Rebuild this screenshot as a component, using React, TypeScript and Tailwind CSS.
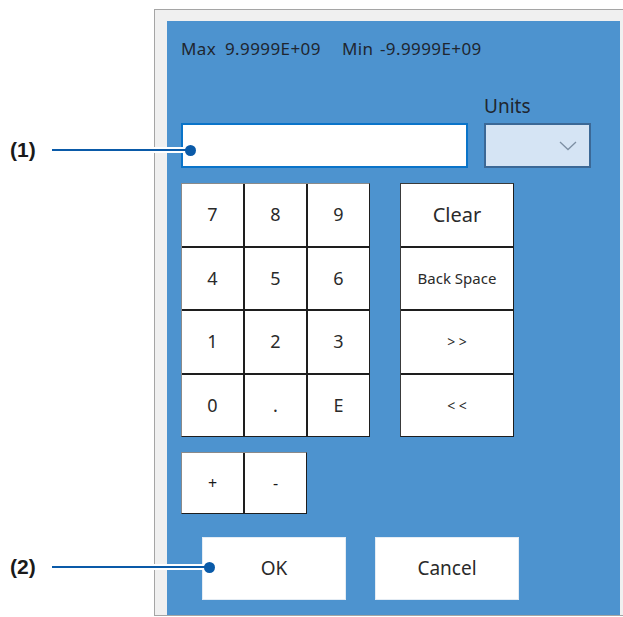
const keys = ["7", "8", "9", "4", "5", "6", "1", "2", "3", "0", ".", "E"];

const sideKeys = [
  { label: "Clear", cls: "text-[20px]" },
  { label: "Back Space", cls: "text-[15px]" },
  { label: "> >", cls: "text-[14px]" },
  { label: "< <", cls: "text-[14px]" },
];

function Callout({ label, top, to }: { label: string; top: number; to: number }) {
  return (
    <div className="absolute left-0 flex items-center" style={{ top: top - 12 }}>
      <span className="w-[52px] pl-[10px] font-['Liberation_Sans',Arial,sans-serif] text-[21px] font-bold leading-6 text-[#1a1a1a]">
        {label}
      </span>
      <div className="flex h-[6px] items-center bg-white" style={{ width: to - 52 }}>
        <div className="h-[2px] w-full bg-[#0a5aa8]" />
      </div>
      <div className="-ml-[5px] h-[11px] w-[11px] rounded-full bg-[#0a5aa8]" />
    </div>
  );
}

export default function App() {
  return (
    <div className="relative h-[617px] w-[623px] overflow-hidden bg-white font-['Noto_Sans','Open_Sans',sans-serif] text-[#1b1b1b]">
      <div className="flex pl-[154px] pt-[9px]">
        <div className="w-[480px] shrink-0 border border-[#a5a5a5] bg-[#f0f0f0] pl-[12px] pt-[11px]">
          <div className="h-[594px] w-[453px] bg-[#4d93cf] pl-[14px] pt-[16px]">
            <p className="flex text-[17px] leading-6 tracking-[0.4px] text-[#1f2630]">
              <span className="w-[44px]">Max</span>
              <span className="w-[117px]">9.9999E+09</span>
              <span className="w-[38px]">Min</span>
              <span>-9.9999E+09</span>
            </p>

            <div className="mt-[33px] flex gap-[16px]">
              <div className="mt-[29px] h-[45px] w-[287px] border-2 border-[#0a74c9] bg-white" />
              <div className="flex flex-col">
                <span className="h-[29px] text-[19px] leading-6 text-[#1f2630]">Units</span>
                <div className="flex h-[45px] w-[107px] items-center justify-end border-2 border-[#3b6896] bg-[#d5e4f4] pr-[12px]">
                  <svg width="18" height="10" viewBox="0 0 18 10" fill="none">
                    <path d="M1 1 L9 8.5 L17 1" stroke="#7d8fa3" strokeWidth="1.3" />
                  </svg>
                </div>
              </div>
            </div>

            <div className="mt-[15px] flex gap-[30px]">
              <div className="grid w-[189px] grid-cols-3 gap-[2px] border border-[#8a8a8a] border-b-[#1e1e1e] border-r-[#1e1e1e] bg-[#1e1e1e]">
                {keys.map((k) => (
                  <div key={k} className="flex h-[61.5px] items-center justify-center bg-white text-[18px] text-[#2a2a2a]">
                    {k}
                  </div>
                ))}
              </div>
              <div className="flex w-[114px] flex-col gap-[2px] border border-[#3a3a3a] border-b-[#1e1e1e] border-r-[#1e1e1e] bg-[#1e1e1e]">
                {sideKeys.map((k) => (
                  <div key={k.label} className={`flex h-[61.5px] items-center justify-center bg-white text-[#2a2a2a] ${k.cls}`}>
                    {k.label}
                  </div>
                ))}
              </div>
            </div>

            <div className="mt-[15px] grid w-[126px] grid-cols-2 gap-[2px] border border-[#8a8a8a] border-b-[#1e1e1e] border-r-[#1e1e1e] bg-[#1e1e1e]">
              <div className="flex h-[60px] items-center justify-center bg-white text-[16px]">+</div>
              <div className="flex h-[60px] items-center justify-center bg-white text-[16px]">-</div>
            </div>

            <div className="ml-[21px] mt-[23px] flex gap-[29px]">
              <div className="flex h-[63px] w-[144px] items-center justify-center border border-[#e4ecf4] bg-white text-[19px] text-[#2a2a2a]">
                OK
              </div>
              <div className="flex h-[63px] w-[144px] items-center justify-center border border-[#e4ecf4] bg-white text-[19px] text-[#2a2a2a]">
                Cancel
              </div>
            </div>
          </div>
        </div>
      </div>

      <Callout label="(1)" top={150} to={190} />
      <Callout label="(2)" top={567} to={209} />
    </div>
  );
}
